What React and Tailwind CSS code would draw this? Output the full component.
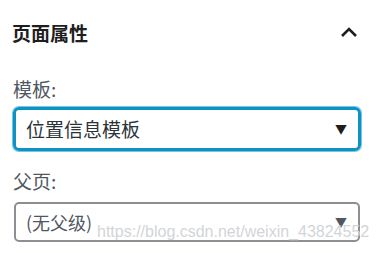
export default function App() {
  const font = { fontFamily: '"Noto Sans CJK SC", "Noto Sans", sans-serif' };

  return (
    <div className="relative w-[378px] h-[253px] bg-white overflow-hidden" style={font}>
      <div className="flex h-[64px] items-center justify-between pl-[12px] pr-[20px]">
        <h2 className="text-[19px] font-bold leading-none text-[#1e1e1e]">页面属性</h2>
        <svg width="18" height="12" viewBox="0 0 18 12" fill="none">
          <path d="M2 10 L9 3 L16 10" stroke="#1e1e1e" strokeWidth="2.6" />
        </svg>
      </div>

      <div className="flex flex-col pl-[13px] pr-[17px]">
        <label className="mt-[13px] h-[24px] text-[19px] leading-[24px] text-[#50575e]">模板:</label>
        <div className="mt-[6px] flex h-[44px] items-center justify-between rounded-[6px] border-[3px] border-[#0a93c4] pl-[10px] pr-[11px] shadow-[0_0_0_1px_#7cc4de]">
          <span className="text-[19px] text-[#2c3338]">位置信息模板</span>
          <span className="text-[12px] text-[#1e1e1e]">▼</span>
        </div>

        <label className="mt-[18px] h-[24px] text-[19px] leading-[24px] text-[#50575e]">父页:</label>
        <div className="mt-[9px] flex h-[40px] items-center justify-between rounded-[5px] border-2 border-[#8c8f94] pl-[10px] pr-[11px] ml-[1px] mr-[1px]">
          <span className="text-[18px] text-[#50575e]">(无父级)</span>
          <span className="text-[12px] text-[#50575e]">▼</span>
        </div>
      </div>

      <div
        className="absolute left-[97px] top-[221px] text-[16px] leading-[22px] text-[#d2d5d8] whitespace-nowrap pointer-events-none"
        style={{ fontFamily: '"Liberation Sans", Arial, sans-serif' }}
      >
        https://blog.csdn.net/weixin_43824552
      </div>
    </div>
  );
}
